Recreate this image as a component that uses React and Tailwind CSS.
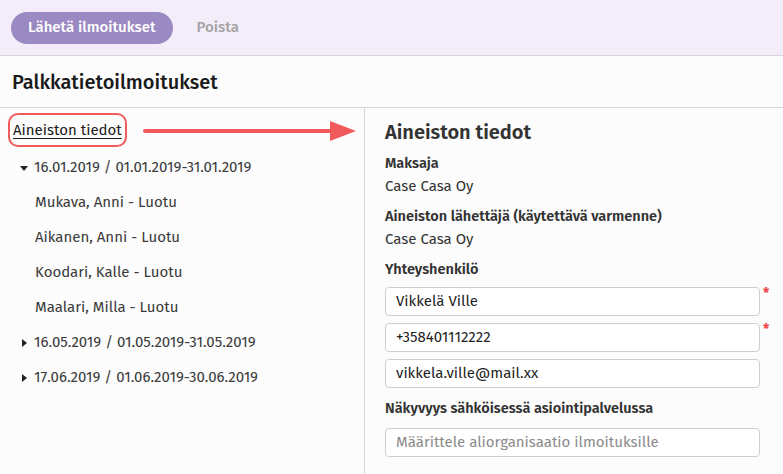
import React from "react";

const font = { fontFamily: '"Fira Sans", "Noto Sans", sans-serif' };

function Caret({ open }) {
  return open ? (
    <svg width="10" height="10" viewBox="0 0 10 10" className="shrink-0">
      <path d="M1 3 L9 3 L5 8 Z" fill="#222" />
    </svg>
  ) : (
    <svg width="10" height="10" viewBox="0 0 10 10" className="shrink-0">
      <path d="M3 1 L8 5 L3 9 Z" fill="#222" />
    </svg>
  );
}

function Field({ value, required, placeholder }) {
  return (
    <div className="flex items-start">
      <div className="w-[375px] h-[29px] border border-[#cfcfcf] rounded-[4px] bg-white flex items-center px-[10px] text-[15px]">
        {value ? (
          <span className="text-[#1f1f1f]">{value}</span>
        ) : (
          <span className="text-[#8a8a8a]">{placeholder}</span>
        )}
      </div>
      {required && <span className="ml-[3px] text-[#ef4444] text-[14px] leading-[14px] font-bold">*</span>}
    </div>
  );
}

function DateRow({ open, a, b }) {
  return (
    <div className="h-[35px] flex items-center gap-[5px] pl-[19px]">
      <Caret open={open} />
      <span>
        {a}
        <span className="mx-[4px]">/</span>
        {b}
      </span>
    </div>
  );
}

export default function App() {
  return (
    <div className="w-[783px] h-[474px] overflow-hidden bg-[#fcfcfc] flex flex-col" style={font}>
      <div className="h-[56px] bg-[#f3edf9] border-b border-[#d8d3dc] flex items-center px-[11px] gap-[24px] shrink-0">
        <div className="h-[32px] px-[17px] rounded-full bg-[#9a89c2] text-white text-[15px] font-medium flex items-center">
          Lähetä ilmoitukset
        </div>
        <span className="text-[#a3a3a3] text-[15px] font-medium">Poista</span>
      </div>
      <div className="h-[52px] border-b border-[#d6d6d6] flex items-center px-[12px] shrink-0">
        <h1 className="text-[20px] font-medium text-[#1a1a1a]">Palkkatietoilmoitukset</h1>
      </div>
      <div className="flex flex-1 min-h-0">
        <div className="w-[365px] border-r border-[#d6d6d6] relative pt-[5px] shrink-0">
          <div className="ml-[8px] inline-flex h-[34px] items-center px-[3px] border-2 border-[#ef5a5a] rounded-[10px]">
            <span className="text-[15px] text-[#1a1a1a] underline underline-offset-[3px]">Aineiston tiedot</span>
          </div>
          <svg className="absolute left-[140px] top-[12px]" width="220" height="22" viewBox="0 0 220 22">
            <line x1="5" y1="11" x2="192" y2="11" stroke="#f05a5a" strokeWidth="4" strokeLinecap="round" />
            <path d="M190 1 L216 11 L190 21 Z" fill="#f05a5a" />
          </svg>
          <div className="flex flex-col text-[15px] text-[#3a3a3a] mt-[3px]">
            <DateRow open a="16.01.2019" b="01.01.2019-31.01.2019" />
            {["Mukava, Anni - Luotu", "Aikanen, Anni - Luotu", "Koodari, Kalle - Luotu", "Maalari, Milla - Luotu"].map((t) => (
              <div key={t} className="h-[35px] flex items-center pl-[35px]">{t}</div>
            ))}
            <DateRow a="16.05.2019" b="01.05.2019-31.05.2019" />
            <DateRow a="17.06.2019" b="01.06.2019-30.06.2019" />
          </div>
        </div>
        <div className="flex-1 pl-[20px] pt-[11px] text-[#333]">
          <h2 className="text-[20px] font-semibold text-[#333] leading-[26px]">Aineiston tiedot</h2>
          <div className="mt-[8px] text-[14.5px] font-semibold leading-[20px]">Maksaja</div>
          <div className="mt-[3px] text-[15px] leading-[20px]">Case Casa Oy</div>
          <div className="mt-[10px] text-[14.5px] font-semibold leading-[20px]">Aineiston lähettäjä (käytettävä varmenne)</div>
          <div className="mt-[3px] text-[15px] leading-[20px]">Case Casa Oy</div>
          <div className="mt-[10px] text-[14.5px] font-semibold leading-[20px]">Yhteyshenkilö</div>
          <div className="mt-[8px] flex flex-col gap-[7px]">
            <Field value="Vikkelä Ville" required />
            <Field value="+358401112222" required />
            <Field value="vikkela.ville@mail.xx" />
          </div>
          <div className="mt-[10px] text-[14.5px] font-semibold leading-[20px]">Näkyvyys sähköisessä asiointipalvelussa</div>
          <div className="mt-[10px]">
            <Field placeholder="Määrittele aliorganisaatio ilmoituksille" />
          </div>
        </div>
      </div>
    </div>
  );
}
